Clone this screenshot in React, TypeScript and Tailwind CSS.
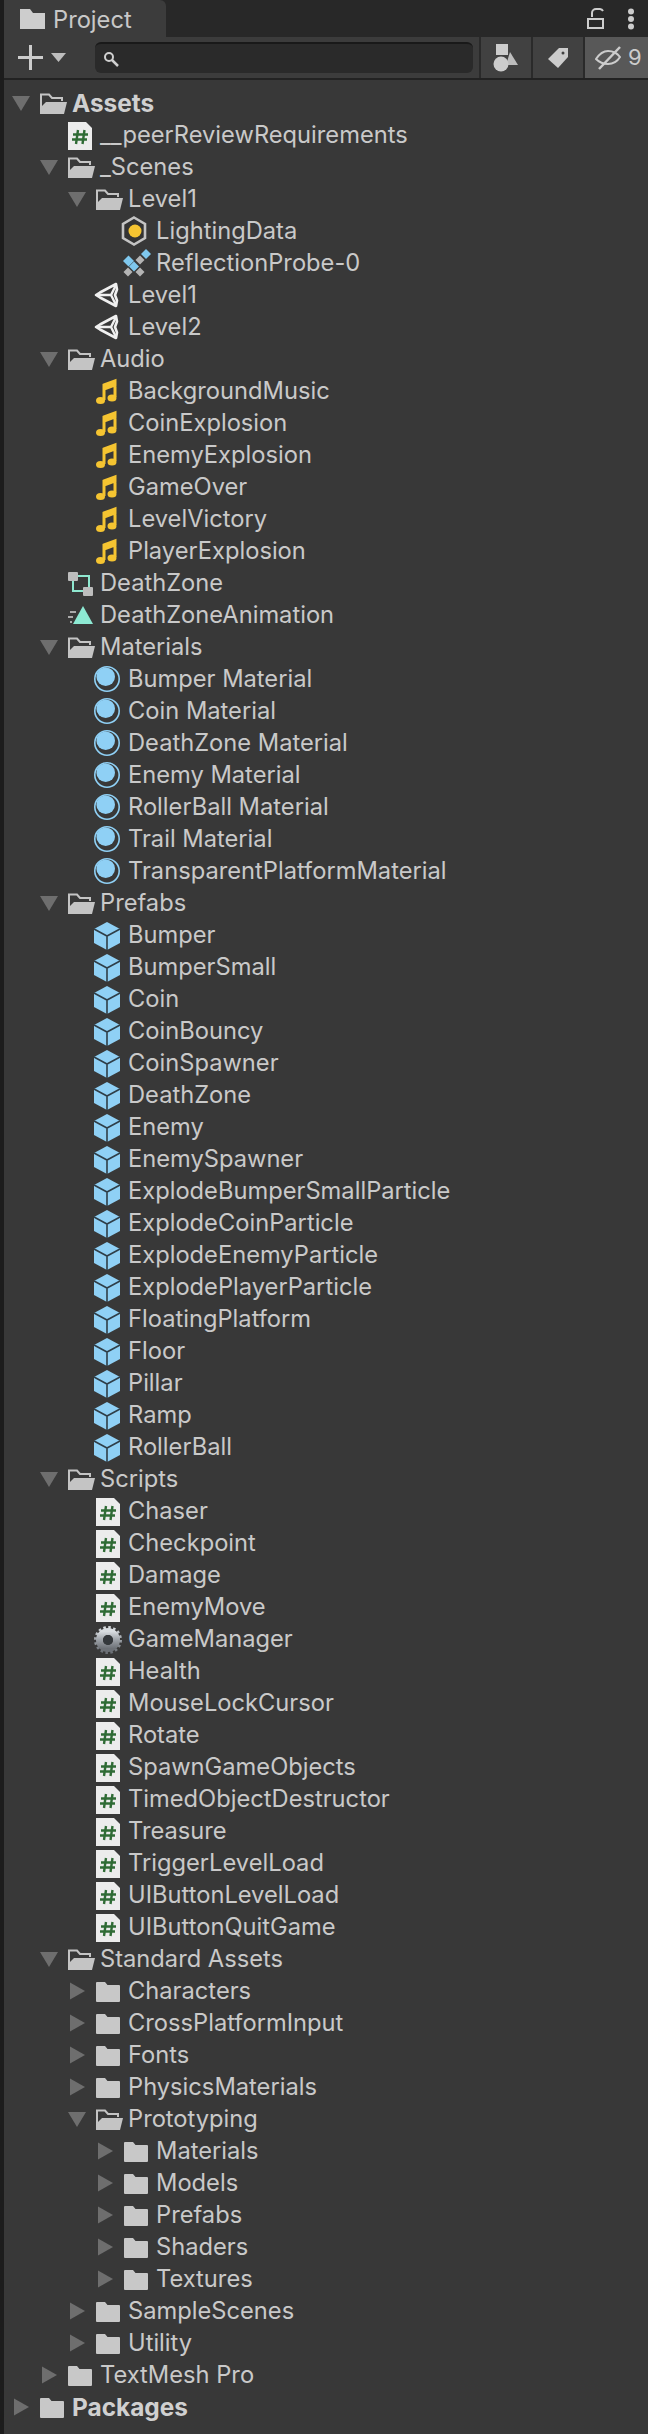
import type { ReactNode } from 'react';

type IconName =
  | 'open' | 'closed' | 'script' | 'lighting' | 'probe' | 'scene' | 'audio'
  | 'controller' | 'anim' | 'material' | 'prefab' | 'gear';

type Row = { name: string; depth: number; icon: IconName; arrow?: 'open' | 'closed'; bold?: boolean };

const leaves = (names: string[], depth: number, icon: IconName): Row[] =>
  names.map(name => ({ name, depth, icon }));

const ROWS: Row[] = [
  { name: 'Assets', depth: 0, icon: 'open', arrow: 'open', bold: true },
  { name: '__peerReviewRequirements', depth: 1, icon: 'script' },
  { name: '_Scenes', depth: 1, icon: 'open', arrow: 'open' },
  { name: 'Level1', depth: 2, icon: 'open', arrow: 'open' },
  { name: 'LightingData', depth: 3, icon: 'lighting' },
  { name: 'ReflectionProbe-0', depth: 3, icon: 'probe' },
  { name: 'Level1', depth: 2, icon: 'scene' },
  { name: 'Level2', depth: 2, icon: 'scene' },
  { name: 'Audio', depth: 1, icon: 'open', arrow: 'open' },
  ...leaves(['BackgroundMusic', 'CoinExplosion', 'EnemyExplosion', 'GameOver', 'LevelVictory', 'PlayerExplosion'], 2, 'audio'),
  { name: 'DeathZone', depth: 1, icon: 'controller' },
  { name: 'DeathZoneAnimation', depth: 1, icon: 'anim' },
  { name: 'Materials', depth: 1, icon: 'open', arrow: 'open' },
  ...leaves(['Bumper Material', 'Coin Material', 'DeathZone Material', 'Enemy Material', 'RollerBall Material', 'Trail Material', 'TransparentPlatformMaterial'], 2, 'material'),
  { name: 'Prefabs', depth: 1, icon: 'open', arrow: 'open' },
  ...leaves(['Bumper', 'BumperSmall', 'Coin', 'CoinBouncy', 'CoinSpawner', 'DeathZone', 'Enemy', 'EnemySpawner', 'ExplodeBumperSmallParticle', 'ExplodeCoinParticle', 'ExplodeEnemyParticle', 'ExplodePlayerParticle', 'FloatingPlatform', 'Floor', 'Pillar', 'Ramp', 'RollerBall'], 2, 'prefab'),
  { name: 'Scripts', depth: 1, icon: 'open', arrow: 'open' },
  ...leaves(['Chaser', 'Checkpoint', 'Damage', 'EnemyMove'], 2, 'script'),
  { name: 'GameManager', depth: 2, icon: 'gear' },
  ...leaves(['Health', 'MouseLockCursor', 'Rotate', 'SpawnGameObjects', 'TimedObjectDestructor', 'Treasure', 'TriggerLevelLoad', 'UIButtonLevelLoad', 'UIButtonQuitGame'], 2, 'script'),
  { name: 'Standard Assets', depth: 1, icon: 'open', arrow: 'open' },
  { name: 'Characters', depth: 2, icon: 'closed', arrow: 'closed' },
  { name: 'CrossPlatformInput', depth: 2, icon: 'closed', arrow: 'closed' },
  { name: 'Fonts', depth: 2, icon: 'closed', arrow: 'closed' },
  { name: 'PhysicsMaterials', depth: 2, icon: 'closed', arrow: 'closed' },
  { name: 'Prototyping', depth: 2, icon: 'open', arrow: 'open' },
  { name: 'Materials', depth: 3, icon: 'closed', arrow: 'closed' },
  { name: 'Models', depth: 3, icon: 'closed', arrow: 'closed' },
  { name: 'Prefabs', depth: 3, icon: 'closed', arrow: 'closed' },
  { name: 'Shaders', depth: 3, icon: 'closed', arrow: 'closed' },
  { name: 'Textures', depth: 3, icon: 'closed', arrow: 'closed' },
  { name: 'SampleScenes', depth: 2, icon: 'closed', arrow: 'closed' },
  { name: 'Utility', depth: 2, icon: 'closed', arrow: 'closed' },
  { name: 'TextMesh Pro', depth: 1, icon: 'closed', arrow: 'closed' },
  { name: 'Packages', depth: 0, icon: 'closed', arrow: 'closed', bold: true },
];

function Svg({ children }: { children: ReactNode }) {
  return (
    <svg width={28} height={28} viewBox="0 0 28 28" className="shrink-0 block overflow-visible">
      {children}
    </svg>
  );
}

function Diamond({ x, y, r, fill }: { x: number; y: number; r: number; fill: string }) {
  return <path d={`M${x} ${y - r}l${r} ${r}-${r} ${r}-${r}-${r}z`} fill={fill} />;
}

function TreeIcon({ name }: { name: IconName }) {
  switch (name) {
    case 'open':
      return (
        <Svg>
          <path d="M1 25V5.500h8l3 3.500h10v3" fill="none" stroke="#c4c4c4" strokeWidth="2" />
          <path d="M6 13h21l-3 12H2v-8z" fill="#c4c4c4" />
        </Svg>
      );
    case 'closed':
      return (
        <Svg>
          <path d="M0 6a1 1 0 0 1 1-1h8l2.500 3H23a1 1 0 0 1 1 1v15a1 1 0 0 1-1 1H1a1 1 0 0 1-1-1z" fill="#c8c8c8" />
        </Svg>
      );
    case 'script':
      return (
        <Svg>
          <path d="M0 1h18l6 6v22H0z" fill="#ececec" />
          <path d="M10 9l-2 14M16.500 9l-2 14M5 13.500h15M4 18.500h15" stroke="#2f6b35" strokeWidth="2.400" fill="none" />
        </Svg>
      );
    case 'lighting':
      return (
        <Svg>
          <path d="M10 0.500l11 6.500v14l-11 6.500L-1 21V7z" fill="#333333" stroke="#c4c4c4" strokeWidth="2.600" />
          <circle cx="11" cy="14" r="6.500" fill="#f5c431" />
        </Svg>
      );
    case 'probe':
      return (
        <Svg>
          <Diamond x={4.500} y={12} r={5.500} fill="#7fc8ee" />
          <Diamond x={10} y={17.500} r={5} fill="#7fc8ee" />
          <Diamond x={22} y={5} r={5} fill="#7fc8ee" />
          <Diamond x={16} y={11} r={4.500} fill="#b4b4b4" />
          <Diamond x={4} y={23} r={4.500} fill="#b4b4b4" />
          <Diamond x={16} y={23} r={4.500} fill="#b4b4b4" />
        </Svg>
      );
    case 'scene':
      return (
        <Svg>
          <path d="M20 3L4 11.500 0 14l4 2.500L20 25l1-5.500-2-5.500 2-5.500z" fill="none" stroke="#f0f0f0" strokeWidth="2.600" strokeLinejoin="round" />
          <path d="M2 14h13l5-10M15 14l5 10" fill="none" stroke="#f0f0f0" strokeWidth="2.400" />
        </Svg>
      );
    case 'audio':
      return (
        <Svg>
          <path d="M8 8v15M19 3v17M8 8l11-4v4L8 12z" fill="#f5c431" stroke="#f5c431" strokeWidth="3" />
          <ellipse cx="4.500" cy="23.500" rx="4.500" ry="3.500" fill="#f5c431" />
          <ellipse cx="16" cy="21" rx="4.500" ry="3.500" fill="#f5c431" />
        </Svg>
      );
    case 'controller':
      return (
        <Svg>
          <path d="M10 7h11v12" fill="none" stroke="#8fe8d0" strokeWidth="2" />
          <path d="M5 12v10h10" fill="none" stroke="#8fe8d0" strokeWidth="2" />
          <rect x="0" y="3" width="10" height="9" rx="1" fill="#bdbdbd" />
          <rect x="15" y="18" width="10" height="9" rx="1" fill="#bdbdbd" />
        </Svg>
      );
    case 'anim':
      return (
        <Svg>
          <path d="M15 5l10 18H5z" fill="#8de9d3" />
          <path d="M2 11h6M0 16h5M2 21h2" stroke="#cfcfcf" strokeWidth="1.600" />
        </Svg>
      );
    case 'material':
      return (
        <Svg>
          <circle cx="11" cy="14" r="12.200" fill="none" stroke="#8fd0f5" strokeWidth="1.600" />
          <circle cx="9.700" cy="11.700" r="9.300" fill="#8fd0f5" />
        </Svg>
      );
    case 'prefab':
      return (
        <Svg>
          <path d="M11 1l13 7v14l-13 7-13-7V8z" fill="#8fd0f5" />
          <path d="M-2 8l13 7 13-7M11 15v14" fill="none" stroke="#2f3e48" strokeWidth="1.600" />
        </Svg>
      );
    case 'gear':
      return (
        <Svg>
          <defs>
            <linearGradient id="gear" x1="0" y1="0" x2="0" y2="1">
              <stop offset="0" stopColor="#d8dce0" />
              <stop offset="0.500" stopColor="#9ba0a6" />
              <stop offset="1" stopColor="#6c7076" />
            </linearGradient>
          </defs>
          <circle cx="12" cy="15" r="12.500" fill="none" stroke="url(#gear)" strokeWidth="3" strokeDasharray="2.500 2.400" />
          <circle cx="12" cy="15" r="8.500" fill="none" stroke="url(#gear)" strokeWidth="7" />
          <circle cx="12" cy="15" r="5" fill="#34383c" />
        </Svg>
      );
  }
}

function Arrow({ dir }: { dir: 'open' | 'closed' }) {
  return (
    <svg width="20" height="20" viewBox="0 0 20 20" className="block">
      {dir === 'open' ? <path d="M0 3h18l-9 15z" fill="#6e6e6e" /> : <path d="M2 1.500l15 8.500-15 8.500z" fill="#6e6e6e" />}
    </svg>
  );
}

function TreeRow({ row }: { row: Row }) {
  return (
    <div className="flex items-center h-8" style={{ paddingLeft: 12 + row.depth * 28 }}>
      <div className="w-7 shrink-0">{row.arrow && <Arrow dir={row.arrow} />}</div>
      <TreeIcon name={row.icon} />
      <span className={`ml-1 leading-8 whitespace-nowrap ${row.bold ? 'text-[24.400px] font-bold text-[#d0d0d0]' : 'text-[23.700px] text-[#c9c9c9]'}`}>
        {row.name}
      </span>
    </div>
  );
}

export default function App() {
  return (
    <div className="w-[648px] h-[2434px] bg-[#383838] border-l-4 border-[#1c1c1c] overflow-hidden font-['Inter',sans-serif]">
      {/* tab strip */}
      <div className="h-[37px] bg-[#282828] flex items-start justify-between">
        <div className="h-[37px] w-[162px] bg-[#3c3c3c] rounded-tr-md flex items-center pl-4 gap-2">
          <svg width="25" height="22" viewBox="0 0 25 22">
            <path d="M0 1h10l3 4h12v16H0z" fill="#cdcdcd" />
          </svg>
          <span className="text-[23.700px] text-[#c8c8c8] pt-[2px]">Project</span>
        </div>
        <div className="flex items-center h-[37px] gap-[22px] pr-[13px]">
          <svg width="18" height="22" viewBox="0 0 18 22" fill="none" stroke="#cdcdcd" strokeWidth="2">
            <path d="M5 9V5a4 4 0 0 1 4-4h4a4 4 0 0 1 3 2" />
            <rect x="1" y="11" width="15" height="9" />
          </svg>
          <svg width="8" height="22" viewBox="0 0 8 22" fill="#cdcdcd">
            <circle cx="4" cy="3.500" r="3" />
            <circle cx="4" cy="11" r="3" />
            <circle cx="4" cy="18.500" r="3" />
          </svg>
        </div>
      </div>
      {/* toolbar */}
      <div className="h-[43px] bg-[#3c3c3c] border-b-2 border-[#222222] flex items-stretch">
        <div className="w-[91px] flex items-center pl-[14px] gap-2">
          <svg width="25" height="25" viewBox="0 0 25 25" fill="#cccccc">
            <path d="M11 0h3v11h11v3H14v11h-3V14H0v-3h11z" />
          </svg>
          <svg width="15" height="9" viewBox="0 0 15 9" fill="#bdbdbd">
            <path d="M0 0h15l-7.500 9z" />
          </svg>
        </div>
        <div className="w-[378px] h-[31px] mt-[5px] bg-[#2a2a2a] border-t-2 border-[#191919] rounded-md flex items-center pl-[8px]">
          <svg width="16" height="16" viewBox="0 0 16 16" fill="none" stroke="#d0d0d0">
            <circle cx="6" cy="6" r="4" strokeWidth="2" />
            <path d="M9 9l6 6" strokeWidth="2.500" />
          </svg>
        </div>
        <div className="w-[6px]" />
        <div className="w-[52px] border-l-2 border-[#2a2a2a] bg-[#414141] flex items-center justify-center">
          <svg width="26" height="28" viewBox="0 0 26 28" fill="#cccccc">
            <rect x="3" y="0" width="12" height="11" />
            <path d="M17 8l8 13H13z" fill="#bdbdbd" />
            <circle cx="8" cy="20" r="7.500" />
          </svg>
        </div>
        <div className="w-[52px] border-l-2 border-[#2a2a2a] bg-[#414141] flex items-center justify-center">
          <svg width="22" height="22" viewBox="0 0 22 22">
            <path d="M12 1l9 0 0 9-10 11-10-9z" fill="#cccccc" />
            <circle cx="16" cy="6" r="1.500" fill="#414141" />
          </svg>
        </div>
        <div className="flex-1 border-l-2 border-[#2a2a2a] bg-[#585858] flex items-center pl-[10px] gap-[7px]">
          <svg width="26" height="24" viewBox="0 0 26 24" fill="none" stroke="#cccccc" strokeWidth="2">
            <path d="M1 13c4-6 8-8 12-8s9 2 12 6c-3 5-7 7-12 7s-9-2-12-5z" />
            <path d="M4 23L25 1" strokeWidth="2.500" />
          </svg>
          <span className="text-[22px] text-[#cccccc]">9</span>
        </div>
      </div>
      {/* asset tree */}
      <div className="pt-[7px] -ml-1">
        {ROWS.map((row, i) => (
          <TreeRow key={i} row={row} />
        ))}
      </div>
    </div>
  );
}
